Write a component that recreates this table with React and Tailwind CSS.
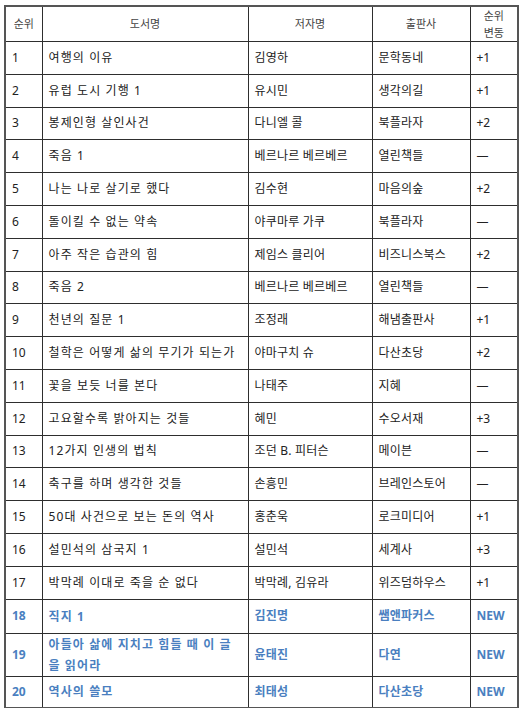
import React from "react";

const rows = [
  ["1", "여행의 이유", "김영하", "문학동네", "+1"],
  ["2", "유럽 도시 기행 1", "유시민", "생각의길", "+1"],
  ["3", "봉제인형 살인사건", "다니엘 콜", "북플라자", "+2"],
  ["4", "죽음 1", "베르나르 베르베르", "열린책들", "—"],
  ["5", "나는 나로 살기로 했다", "김수현", "마음의숲", "+2"],
  ["6", "돌이킬 수 없는 약속", "야쿠마루 가쿠", "북플라자", "—"],
  ["7", "아주 작은 습관의 힘", "제임스 클리어", "비즈니스북스", "+2"],
  ["8", "죽음 2", "베르나르 베르베르", "열린책들", "—"],
  ["9", "천년의 질문 1", "조정래", "해냄출판사", "+1"],
  ["10", "철학은 어떻게 삶의 무기가 되는가", "야마구치 슈", "다산초당", "+2"],
  ["11", "꽃을 보듯 너를 본다", "나태주", "지혜", "—"],
  ["12", "고요할수록 밝아지는 것들", "혜민", "수오서재", "+3"],
  ["13", "12가지 인생의 법칙", "조던 B. 피터슨", "메이븐", "—"],
  ["14", "축구를 하며 생각한 것들", "손흥민", "브레인스토어", "—"],
  ["15", "50대 사건으로 보는 돈의 역사", "홍춘욱", "로크미디어", "+1"],
  ["16", "설민석의 삼국지 1", "설민석", "세계사", "+3"],
  ["17", "박막례 이대로 죽을 순 없다", "박막례, 김유라", "위즈덤하우스", "+1"],
];

const newRows = [
  { rank: "18", title: "직지 1", author: "김진명", pub: "쌤앤파커스", h: "h-[34px]" },
  { rank: "19", title: ["아들아 삶에 지치고 힘들 때 이 글", "을 읽어라"], author: "윤태진", pub: "다연", h: "h-[40px]" },
  { rank: "20", title: "역사의 쓸모", author: "최태성", pub: "다산초당", h: "h-[32px]" },
];

const cell = "border border-[#2e2e2e] px-[6px] align-middle";

export default function App() {
  return (
    <div className="bg-white w-[520px] h-[708px] pt-[5px] pl-[4px] font-['Noto_Sans','Noto_Sans_CJK_KR',sans-serif]">
      <table className="table-fixed border-collapse w-[513px] border-2 border-[#555] text-[12px] text-[#222]">
        <colgroup>
          <col className="w-[37px]" />
          <col className="w-[206px]" />
          <col className="w-[124px]" />
          <col className="w-[98px]" />
          <col className="w-[48px]" />
        </colgroup>
        <thead>
          <tr className="h-[32.8px] text-[11px] text-[#444]">
            <th className={`${cell} font-normal text-center`}>순위</th>
            <th className={`${cell} font-normal text-center`}>도서명</th>
            <th className={`${cell} font-normal text-center`}>저자명</th>
            <th className={`${cell} font-normal text-center`}>출판사</th>
            <th className={`${cell} font-normal text-center leading-[17px] px-0`}>
              순위
              <br />
              변동
            </th>
          </tr>
        </thead>
        <tbody>
          {rows.map((r) => (
            <tr key={r[0]} className="h-[32.8px]">
              <td className={cell}>{r[0]}</td>
              <td className={`${cell} tracking-[1.1px]`}>{r[1]}</td>
              <td className={`${cell} tracking-[0.2px]`}>{r[2]}</td>
              <td className={`${cell} tracking-[0.2px]`}>{r[3]}</td>
              <td className={cell}>{r[4]}</td>
            </tr>
          ))}
          {newRows.map((r) => (
            <tr key={r.rank} className={`${r.h} font-bold text-[#4a7fc0]`}>
              <td className={cell}>{r.rank}</td>
              <td className={`${cell} tracking-[1.1px] leading-[21px]`}>
                {Array.isArray(r.title) ? (
                  <>
                    {r.title[0]}
                    <br />
                    {r.title[1]}
                  </>
                ) : (
                  r.title
                )}
              </td>
              <td className={`${cell} tracking-[0.2px]`}>{r.author}</td>
              <td className={`${cell} tracking-[0.2px]`}>{r.pub}</td>
              <td className={cell}>NEW</td>
            </tr>
          ))}
        </tbody>
      </table>
    </div>
  );
}
